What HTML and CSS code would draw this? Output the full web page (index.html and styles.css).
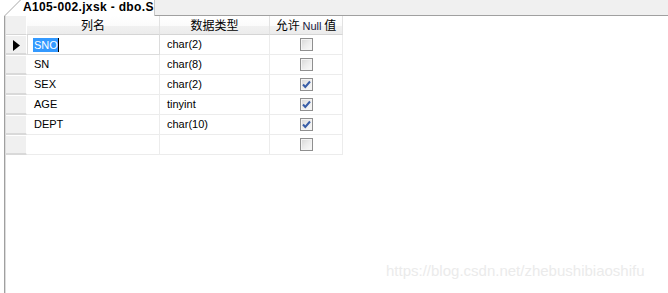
FILE: index.html
```html
<!DOCTYPE html>
<html>
<head>
<meta charset="utf-8">
<link rel="stylesheet" href="styles.css">
</head>
<body>
<div class="page">
  <div class="tabstrip">
    <div class="tab">
      <svg class="tab-slant" width="21" height="16" viewBox="0 0 21 16"><line x1="4.5" y1="16" x2="20.5" y2="0" stroke="#a8a8a8" stroke-width="1"/></svg>
      <span class="tab-title">A105-002.jxsk - dbo.S</span>
    </div>
    <div class="strip-rest"></div>
  </div>
  <div class="content">
    <div class="edge"></div>
    <div class="grid">
      <div class="hcell sel"></div>
      <div class="hcell">列名</div>
      <div class="hcell">数据类型</div>
      <div class="hcell">允许 <span class="latin">Null</span> 值</div>

      <div class="sel rowsel"><svg width="7" height="11" viewBox="0 0 7 11"><polygon points="0,0 7,5.5 0,11" fill="#000"/></svg></div>
      <div class="cell editing"><span class="selected">SNO</span><span class="caret"></span></div>
      <div class="cell">char(2)</div>
      <div class="cell chk"><span class="box"></span></div>

      <div class="sel rowsel"></div>
      <div class="cell">SN</div>
      <div class="cell">char(8)</div>
      <div class="cell chk"><span class="box"></span></div>

      <div class="sel rowsel"></div>
      <div class="cell">SEX</div>
      <div class="cell">char(2)</div>
      <div class="cell chk"><span class="box checked"><svg width="9" height="9" viewBox="0 0 9 9"><path d="M1 4.5 L3.3 7 L8 1.5" fill="none" stroke="#3a5fa8" stroke-width="2"/></svg></span></div>

      <div class="sel rowsel"></div>
      <div class="cell">AGE</div>
      <div class="cell">tinyint</div>
      <div class="cell chk"><span class="box checked"><svg width="9" height="9" viewBox="0 0 9 9"><path d="M1 4.5 L3.3 7 L8 1.5" fill="none" stroke="#3a5fa8" stroke-width="2"/></svg></span></div>

      <div class="sel rowsel"></div>
      <div class="cell">DEPT</div>
      <div class="cell">char(10)</div>
      <div class="cell chk"><span class="box checked"><svg width="9" height="9" viewBox="0 0 9 9"><path d="M1 4.5 L3.3 7 L8 1.5" fill="none" stroke="#3a5fa8" stroke-width="2"/></svg></span></div>

      <div class="sel rowsel"></div>
      <div class="cell"></div>
      <div class="cell"></div>
      <div class="cell chk"><span class="box"></span></div>
    </div>
  </div>
  <div class="watermark">https://blog.csdn.net/zhebushibiaoshifu</div>
</div>
</body>
</html>
```

FILE: styles.css
```css
html, body {
  margin: 0;
  padding: 0;
  background: #fff;
}
.page {
  position: relative;
  width: 668px;
  height: 293px;
  overflow: hidden;
  font-family: "Liberation Sans", Arial, sans-serif;
  font-size: 11px;
  color: #000;
}
.tabstrip {
  display: flex;
  height: 16px;
}
.tab {
  width: 155px;
  height: 16px;
  display: flex;
  align-items: flex-start;
  background: #fff;
  border-right: 1px solid #c8c8c8;
  box-sizing: border-box;
  overflow: hidden;
  white-space: nowrap;
}
.tab-slant {
  flex: none;
  display: block;
}
.tab-title {
  font-weight: bold;
  font-size: 12px;
  letter-spacing: 0.35px;
  line-height: 15px;
  margin-left: 2px;
}
.strip-rest {
  flex: 1;
  height: 16px;
  background: #f0f0f0;
  border-bottom: 1px solid #a0a0a0;
  box-sizing: border-box;
}
.content {
  display: flex;
  height: 277px;
}
.edge {
  width: 4px;
  border-right: 1px solid #a0a0a0;
  box-shadow: 1px 0 0 #dcdcdc;
  flex: none;
}
.grid {
  margin-left: 1px;
  display: grid;
  grid-template-columns: 21px 133px 110px 73px;
  grid-template-rows: 19px repeat(6, 20px);
  align-self: flex-start;
}
.hcell {
  box-sizing: border-box;
  background: linear-gradient(#ffffff 0%, #fbfbfb 55%, #f1f1f1 56%, #ececec 100%);
  border-right: 1px solid #e2e2e2;
  border-bottom: 1px solid #d5d5d5;
  font-family: "Noto Sans CJK SC", "Liberation Sans", sans-serif;
  font-size: 12px;
  line-height: 18px;
  text-align: center;
  white-space: nowrap;
}
.hcell .latin {
  font-family: "Liberation Sans", Arial, sans-serif;
  font-size: 11px;
  color: #1a1a40;
}
.hcell.sel {
  background: #f0f0f0;
  border-right: 1px solid #fff;
}
.rowsel {
  box-sizing: border-box;
  background: #f0f0f0;
  border-right: 1px solid #fff;
  border-bottom: 2px solid #d9d9d9;
  border-top: 1px solid #fff;
  display: flex;
  align-items: center;
  padding-left: 7px;
}
.rowsel svg {
  display: block;
  margin-top: 1px;
}
.cell {
  box-sizing: border-box;
  border-right: 1px solid #ececec;
  border-bottom: 1px solid #ececec;
  line-height: 19px;
  padding-left: 7px;
  white-space: nowrap;
}
.cell.editing {
  border: 1px solid #dcdcdc;
  border-top: none;
  padding-left: 5px;
  display: flex;
  align-items: center;
}
.selected {
  background: #3399ff;
  color: #fff;
  line-height: 14px;
  padding: 0 0 0 1px;
}
.caret {
  display: inline-block;
  width: 1px;
  height: 14px;
  background: #000;
}
.chk {
  display: flex;
  align-items: center;
  justify-content: center;
  padding-left: 0;
}
.box {
  width: 13px;
  height: 13px;
  box-sizing: border-box;
  border: 1px solid #8f8f8f;
  background: linear-gradient(135deg, #d6d6d6 0%, #ececec 50%, #fafafa 100%);
  box-shadow: inset 0 0 0 1px #f4f4f4;
  display: flex;
  align-items: center;
  justify-content: center;
  margin-left: 1px;
}
.box svg {
  display: block;
}
.watermark {
  position: absolute;
  left: 386px;
  top: 262px;
  font-family: "Liberation Sans", Arial, sans-serif;
  font-size: 15px;
  color: #ebebeb;
  white-space: nowrap;
}
```
